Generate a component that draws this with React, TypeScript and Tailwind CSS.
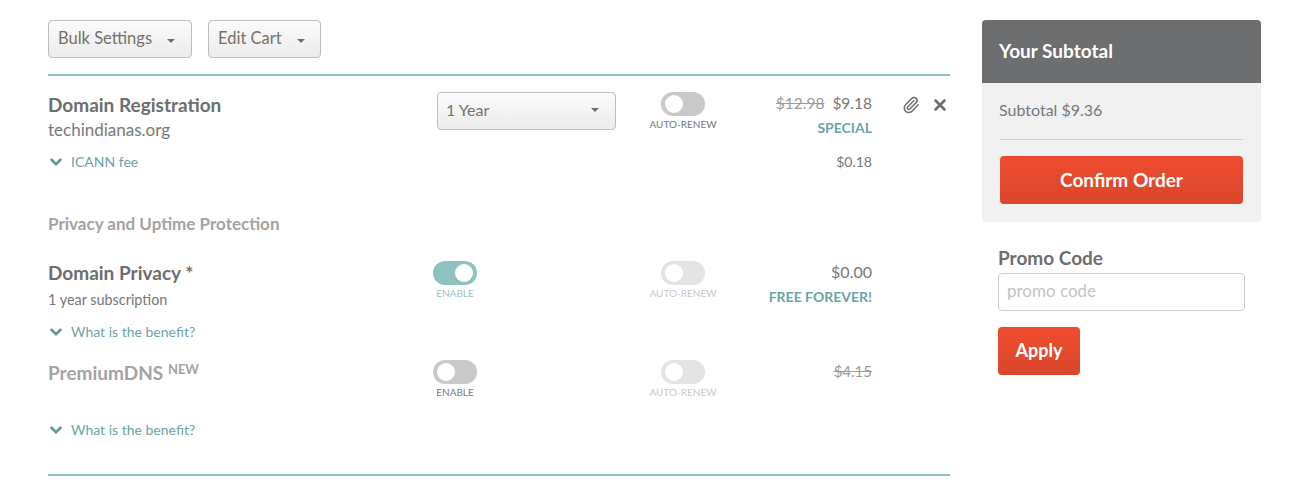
import { ChevronDown, Paperclip, X } from "lucide-react";

const Caret = () => <span className="inline-block h-0 w-0 border-x-[4px] border-t-[4px] border-x-transparent border-t-[#6d6e70]" />;

function Toggle({ on, faded, label, tone }: { on?: boolean; faded?: boolean; label: string; tone: string }) {
  const track = on ? "bg-[#8cc3c1] justify-end" : faded ? "bg-[#e4e4e4] justify-start" : "bg-[#c9c9c9] justify-start";
  return (
    <div className="flex w-[68px] flex-col items-center">
      <div className={"flex h-6 w-11 items-center rounded-full px-1 " + track}>
        <span className="h-[18px] w-[18px] rounded-full bg-white" />
      </div>
      <span className={"mt-[2px] text-[10px] leading-[12px] whitespace-nowrap " + tone}>{label}</span>
    </div>
  );
}

function Benefit({ label }: { label: string }) {
  return (
    <div className="flex items-center text-sm leading-5 text-[#6aa5a6]">
      <ChevronDown size={18} strokeWidth={3.5} className="-ml-px text-[#5c9a9b]" />
      <span className="ml-[6px]">{label}</span>
    </div>
  );
}

export default function App() {
  return (
    <div className="flex h-[498px] w-[1306px] gap-8 bg-white pl-12 font-['Lato',sans-serif] text-[#6d6e70]">
      <div className="w-[902px] pt-5">
        <div className="flex gap-4">
          <button className="flex h-[38px] w-[144px] items-center rounded border border-[#bdbdbd] bg-gradient-to-b from-[#fbfbfb] to-[#ececec] pb-[2px] pl-[9px] text-[16.5px] whitespace-nowrap text-[#77706a]">
            Bulk Settings <span className="mt-[5px] ml-[15px] flex"><Caret /></span>
          </button>
          <button className="flex h-[38px] w-[113px] items-center rounded border border-[#bdbdbd] bg-gradient-to-b from-[#fbfbfb] to-[#ececec] pb-[2px] pl-[9px] text-[16.5px] whitespace-nowrap text-[#77706a]">
            Edit Cart <span className="mt-[5px] ml-[15px] flex"><Caret /></span>
          </button>
        </div>

        <div className="mt-4 h-[2px] bg-[#8cc3c1]" />

        {/* registration */}
        <div className="mt-4 grid h-[54px] grid-cols-[373px_228px_68px_155px_1fr]">
          <div>
            <div className="text-[19px] leading-[26px] font-bold text-[#6d6e70]">Domain Registration</div>
            <div className="text-[17px] leading-6 text-[#77787a]">techindianas.org</div>
          </div>
          <div>
            <button className="ml-4 flex h-[38px] w-[179px] items-center justify-between rounded border border-[#bdbdbd] bg-gradient-to-b from-[#fbfbfb] to-[#ececec] pr-4 pb-[2px] pl-2 text-base text-[#77706a]">
              1 Year <Caret />
            </button>
          </div>
          <Toggle label="AUTO-RENEW" tone="text-[#77787a]" />
          <div className="-mt-px text-right">
            <div className="text-[15.5px] leading-6 text-[#77787a]">
              <span className="text-[#9b9b9b] line-through">$12.98</span>
              <span className="ml-2">$9.18</span>
            </div>
            <div className="mt-[1px] text-sm leading-6 font-bold text-[#6aa5a6]">SPECIAL</div>
          </div>
          <div className="flex h-6 items-start gap-[11px] pt-[4px] pl-[30px] text-[#6d6e70]">
            <Paperclip size={18} strokeWidth={2} />
            <X size={18} strokeWidth={3.5} />
          </div>
        </div>
        <div className="mt-[6px] flex h-5 items-center justify-between pr-[78px]">
          <Benefit label="ICANN fee" />
          <span className="text-sm text-[#77787a]">$0.18</span>
        </div>

        <div className="mt-10 text-[17px] leading-6 font-bold text-[#a3a3a3]">Privacy and Uptime Protection</div>

        {/* privacy */}
        <div className="mt-[25px] grid h-[50px] grid-cols-[373px_228px_68px_155px_1fr]">
          <div className="-mt-px">
            <div className="text-[19px] leading-[26px] font-bold">Domain Privacy *</div>
            <div className="mt-[4px] text-[14.4px] leading-5 text-[#77787a]">1 year subscription</div>
          </div>
          <Toggle on label="ENABLE" tone="text-[#9cc4c3]" />
          <Toggle faded label="AUTO-RENEW" tone="text-[#c8c8c8]" />
          <div className="-mt-px text-right">
            <div className="text-base leading-6 text-[#77787a]">$0.00</div>
            <div className="mt-[1px] text-sm leading-6 font-bold text-[#6aa5a6]">FREE FOREVER!</div>
          </div>
        </div>
        <div className="mt-[11px]">
          <Benefit label="What is the benefit?" />
        </div>

        {/* premium dns */}
        <div className="mt-[18px] grid h-[50px] grid-cols-[373px_228px_68px_155px_1fr]">
          <div className="-mt-px text-[19px] leading-7 font-bold text-[#a3a3a3]">
            PremiumDNS <sup className="-top-[6px] text-[13px] font-bold">NEW</sup>
          </div>
          <Toggle label="ENABLE" tone="text-[#77787a]" />
          <Toggle faded label="AUTO-RENEW" tone="text-[#c8c8c8]" />
          <div className="-mt-px text-right text-[15px] leading-6 text-[#9b9b9b] line-through">$4.15</div>
        </div>
        <div className="mt-[10px]">
          <Benefit label="What is the benefit?" />
        </div>

        <div className="mt-[34px] h-[2px] bg-[#8cc3c1]" />
      </div>

      <div className="w-[279px] pt-5">
        <div className="overflow-hidden rounded bg-[#f1f1f1]">
          <div className="flex h-[63px] items-center bg-[#6d6e70] px-[17px] pb-px text-[19px] font-bold text-white">Your Subtotal</div>
          <div className="px-[18px] pt-[15px] pb-[18px]">
            <div className="-ml-px text-base leading-6 text-[#77787a]">Subtotal $9.36</div>
            <div className="mt-[17px] h-px bg-[#d2d2d2]" />
            <button className="mt-4 h-12 w-full rounded bg-gradient-to-b from-[#ef4c2e] to-[#d9472b] text-[19px] font-bold text-white">Confirm Order</button>
          </div>
        </div>
        <div className="mt-6 pl-4">
          <div className="text-[19px] leading-6 font-bold">Promo Code</div>
          <input placeholder="promo code" className="mt-[3px] h-[38px] w-[247px] rounded border border-[#cccccc] bg-white px-2 pb-[3px] text-[17px] placeholder:text-[#c4c4c4]" />
          <button className="mt-4 block h-12 w-[82px] rounded bg-gradient-to-b from-[#ef4c2e] to-[#d9472b] pb-[2px] text-lg font-bold text-white">Apply</button>
        </div>
      </div>
    </div>
  );
}
